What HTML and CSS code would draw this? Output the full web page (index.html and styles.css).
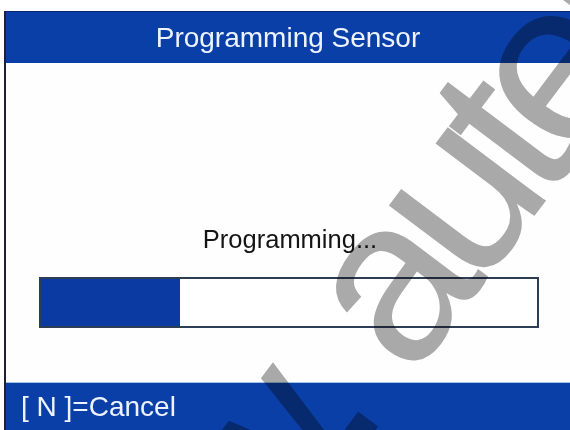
FILE: index.html
```html
<!DOCTYPE html>
<html>
<head>
<meta charset="utf-8">
<title>Programming Sensor</title>
<link rel="stylesheet" href="styles.css">
</head>
<body>
<div id="screen">
  <div id="title">Programming Sensor</div>
  <div id="content">
    <div class="message">Programming...</div>
    <div class="progress"><div class="fill" style="width:28%"></div></div>
  </div>
  <div id="footer">[ N ]=Cancel</div>
</div>
<svg class="watermark" width="570" height="430" viewBox="0 0 570 430">
  <text x="380" y="424" transform="rotate(-53 380 424)" text-anchor="end">w.</text>
  <text x="411" y="380" transform="rotate(-53 411 380)">autel</text>
</svg>
</body>
</html>
```

FILE: styles.css
```css
body {margin: 0;background: #fff;font-family: "Liberation Sans", Arial, sans-serif;width: 570px;height: 430px;overflow: hidden;}
#screen {margin: 11px 0 0 4px;height: 419px;border-left: 2px solid #1c2233;display: flex;flex-direction: column;}
#title {height: 51px;line-height: 51px;border-top: 1px solid #06276e;background: #0a3fa7;color: #eef4ff;font-size: 28px;text-align: center;}
#content {flex: 1;background: #fdfefd;padding-top: 162px;}
.message {font-size: 25.5px;color: #141414;text-align: center;padding-left: 4px;}
.progress {margin: 23px 0 0 33px;width: 496px;height: 47px;border: 2px solid #2e3d56;background: #fff;}
.progress .fill {height: 100%;background: #0a3aa2;}
#footer {border-top: 1px solid #9fc4e4;background: #0a3fa7;color: #eef4ff;font-size: 28px;line-height: 32px;padding: 8px 0 0 15px;box-sizing: border-box;height: 48px;}
.watermark {position: absolute;left: 0;top: 0;pointer-events: none;mix-blend-mode: multiply;font-family: "Liberation Sans", Arial, sans-serif;font-size: 232px;letter-spacing: -18px;fill: #aaaaaa;}
```
